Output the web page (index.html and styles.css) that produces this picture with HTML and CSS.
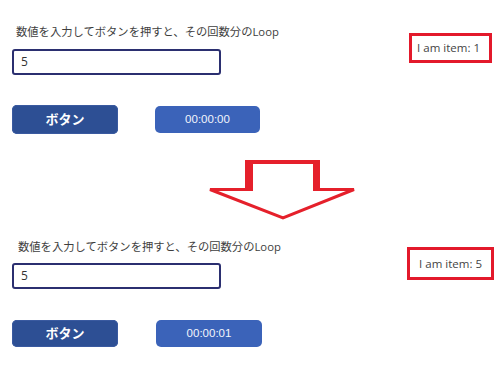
FILE: index.html
```html
<!DOCTYPE html>
<html lang="ja">
<head>
<meta charset="utf-8">
<link rel="stylesheet" href="styles.css">
</head>
<body>
<main class="page">
  <section class="panel panel-top">
    <div class="form">
      <p class="label">数値を入力してボタンを押すと、その回数分のLoop</p>
      <div class="input">5</div>
      <div class="actions">
        <div class="btn">ボタン</div>
        <div class="timer">00:00:00</div>
      </div>
    </div>
    <div class="item">I am item: 1</div>
  </section>

  <div class="arrow-row">
    <svg class="arrow" width="155" height="68" viewBox="0 0 155 68">
      <rect x="40" y="5" width="75" height="4" fill="#e5202b"/>
      <rect x="40" y="5" width="8" height="31" fill="#e5202b"/>
      <rect x="108" y="5" width="7" height="31" fill="#e5202b"/>
      <polyline points="48,34.5 5,34.5 78,63 149,34.5 108,34.5" fill="none" stroke="#e5202b" stroke-width="3" stroke-linejoin="miter"/>
    </svg>
  </div>

  <section class="panel panel-bottom">
    <div class="form">
      <p class="label">数値を入力してボタンを押すと、その回数分のLoop</p>
      <div class="input">5</div>
      <div class="actions">
        <div class="btn">ボタン</div>
        <div class="timer">00:00:01</div>
      </div>
    </div>
    <div class="item">I am item: 5</div>
  </section>
</main>
</body>
</html>
```

FILE: styles.css
```css
html, body {
  margin: 0;
  padding: 0;
  background: #ffffff;
}

.page {
  width: 500px;
  height: 373px;
  overflow: hidden;
  font-family: "Open Sans", "Noto Sans CJK JP", sans-serif;
  color: #444444;
}

.panel {
  display: flex;
  align-items: flex-start;
  padding-left: 12px;
}

.panel-top {
  padding-top: 24px;
  height: 110px;
}

.panel-bottom {
  padding-top: 0;
}

.form {
  display: flex;
  flex-direction: column;
}

.label {
  margin: 0;
  font-size: 11.3px;
  line-height: 15px;
  height: 15px;
  padding-left: 4px;
  color: #3e3e3e;
  white-space: nowrap;
}

.input {
  box-sizing: border-box;
  width: 209px;
  height: 26px;
  margin-top: 10px;
  border: 2px solid #2b2f70;
  border-radius: 3px;
  padding-left: 7px;
  font-size: 12px;
  line-height: 22px;
  color: #333333;
}

.actions {
  display: flex;
  align-items: center;
  margin-top: 30px;
}

.btn {
  box-sizing: border-box;
  width: 106px;
  height: 29px;
  background: #2d4f94;
  border-radius: 5px;
  color: #ffffff;
  font-family: "Noto Sans CJK JP", sans-serif;
  font-weight: 700;
  font-size: 13px;
  line-height: 27px;
  text-align: center;
  box-shadow: 0 0 0 1px #3a5aa0 inset;
}

.timer {
  box-sizing: border-box;
  width: 105px;
  height: 27px;
  margin-left: 37px;
  background: #3b63b9;
  border-radius: 5px;
  color: #f2f5fc;
  font-family: "Liberation Sans", Arial, sans-serif;
  font-size: 11.5px;
  line-height: 27px;
  text-align: center;
}

.item {
  box-sizing: border-box;
  margin-left: auto;
  border: 3px solid #e3192b;
  font-size: 11.5px;
  color: #444444;
  text-align: right;
  white-space: nowrap;
}

.panel-top .item {
  margin-top: 9px;
  margin-right: 8px;
  width: 83px;
  height: 30px;
  line-height: 24px;
  padding-right: 9px;
}

.panel-bottom .item {
  margin-top: 8px;
  margin-right: 6px;
  width: 87px;
  height: 33px;
  line-height: 27px;
  padding-right: 9px;
}

.panel-bottom .label {
  padding-left: 6px;
}

.panel-bottom .input {
  margin-top: 9px;
}

.panel-bottom .actions {
  margin-top: 31px;
}

.panel-bottom .btn {
  height: 27px;
  line-height: 25px;
}

.panel-bottom .timer {
  margin-left: 38px;
  width: 106px;
}

.arrow-row {
  display: flex;
  padding-left: 205px;
  padding-top: 21px;
  height: 84px;
}

.arrow {
  display: block;
}
```
